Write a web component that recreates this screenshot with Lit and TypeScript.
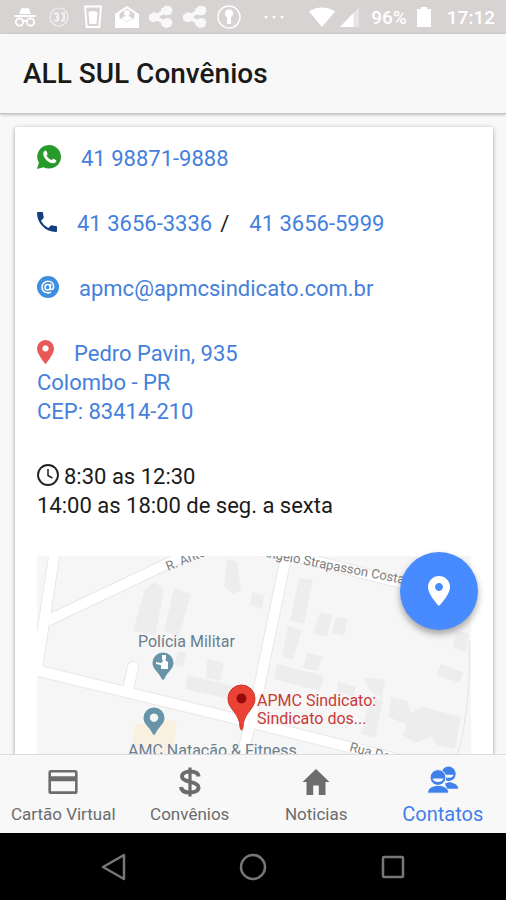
import { LitElement, html, svg, css } from "lit";
import { customElement, state } from "lit/decorators.js";

const tabs = [
  { id: "card", label: "Cartão Virtual" },
  { id: "deals", label: "Convênios" },
  { id: "news", label: "Noticias" },
  { id: "contacts", label: "Contatos" },
];

const tabIcons: Record<string, unknown> = {
  card: html`<svg viewBox="0 0 32 32" width="32" height="32">
    <path fill="currentColor" fill-rule="evenodd" d="M4 4h24a2.600 2.600 0 0 1 2.600 2.600v18.800a2.600 2.600 0 0 1-2.600 2.600H4a2.600 2.600 0 0 1-2.600-2.600V6.600A2.600 2.600 0 0 1 4 4zm0 2.500v3.700h24V6.500zm0 8.700v10h24v-10z" />
  </svg>`,
  deals: html`<svg viewBox="0 0 32 32" width="32" height="32">
    <g fill="none" stroke="currentColor">
      <path stroke-width="4" d="M24.700 10.500C24.300 7 20.500 5.600 16 5.600s-8 1.700-8 5c0 3.200 3.600 4.300 8 5.300 4.600 1 8.500 2.200 8.500 5.600 0 3.400-4 5-8.500 5-4.700 0-8.700-1.700-9-5.500" />
      <path stroke-width="3.200" d="M16 1.500v29" />
    </g>
  </svg>`,
  news: html`<svg viewBox="0 0 32 32" width="32" height="32">
    <path fill="currentColor" d="M16 3 2.500 16H6.500v13h6.700V19.500h5.600V29h6.700V16h4z" />
  </svg>`,
  contacts: html`<svg viewBox="0 0 32 32" width="32" height="32">
    <g fill="currentColor">
      <circle cx="21.500" cy="7.800" r="7.200" />
      <path fill="#f8f8f8" d="M16.500 8.800h10a5 3 0 0 1-10 0z" />
      <path d="M18 17.500c4-1.500 5-1.500 7-.8 3.800 1.300 5.800 2.400 6.200 6H20z" />
      <g stroke="#f8f8f8">
        <path stroke-width="1" d="M.6 27.200c.4-4.400 2.400-5.800 6.200-7.200 2.400-.9 6.400-.9 8.800 0 3.800 1.400 5.800 2.800 6.200 7.200z" />
        <circle cx="11" cy="11.500" r="7.900" stroke-width="1" />
      </g>
      <path fill="#f8f8f8" d="M5.600 12.500h10.800a5.400 3.400 0 0 1-10.800 0z" />
    </g>
  </svg>`,
};

const shareIcon = svg`<g opacity=".85">
  <path d="m4.500 7 4.500 1.500 1.500 3.500-2 4-4.500 1.500L0 15l-.5-4.500z" />
  <path d="m16.500.500 5.500 1 1.500 4-1.500 4-5.500 1-4-2-.5-4.500z" />
  <path d="m16.500 13 5 .5 2 4-2 4.500-5 1-4-2.500-.5-4z" />
  <path fill="none" stroke="#fff" stroke-width="4" d="m6 12 10-6M6 12l10 6" />
</g>`;

const notificationIcons = [
  svg`<path d="M8 3.500 10 3l2 .6L14 3l2 .5 1.700 5.500H6.300zM1.500 10h21v2h-21z" />
      <g fill="none" stroke="#fff" stroke-width="1.800"><circle cx="6.500" cy="17" r="3.700" /><circle cx="17.500" cy="17" r="3.700" /><path d="M10 16.500c1.200-.9 2.800-.9 4 0" /></g>`,
  svg`<g fill="none" stroke="#fff" opacity=".7"><circle cx="12" cy="12" r="9" stroke-width="1.200" /><path stroke-width="2.200" d="M7 8.500h4v7H7m2-3.500h2m3-3.500h3v7h-3" /></g>`,
  svg`<path fill="none" stroke="#fff" stroke-width="1.900" d="M4 1.500h16L18.300 22H5.700z" /><path d="M7.500 7 12 6l4.500 1-1 12h-7z" />`,
  svg`<path fill-rule="evenodd" d="M12 1 24 9v14H0V9zm0 2.500L4.500 8.500V13l7.500 4 7.500-4V8.500z" /><circle cx="12" cy="8" r="3" /><path d="M7 14c0-4 10-4 10 0l-5 2.500z" />`,
  shareIcon,
  shareIcon,
  svg`<circle cx="12" cy="12" r="11" fill="none" stroke="#fff" stroke-width="1.400" /><circle cx="12" cy="8.500" r="4" /><path d="M10 10.500h4V19h-4z" />`,
];

const buildings = [
  "M108 33l10-7 9 8-9 46-22-5z",
  "M137 32l17 6-12 42-15-5z",
  "M190 3l10 3 4 28-8 4-9-8z",
  "M170 103l17 4-4 18-14-3z",
  "M151 119l45 11 0 14-48-11z",
  "M141 96l8 1-3 14-9-3z",
  "M262 22l14 2-9 44-14-3z",
  "M283 56l12 3-5 22-14-4zM299 61l12 2-4 17-12-3z",
  "M251 70l14 4-9 30-11-4z",
  "M270 97l16 4-6 14-14-3z",
  "M240 108l47 12-4 15-46-12z",
  "M326 121l22 3-3 18-12-7zM301 126l18 5-3 10-16-5z",
  "M334 140l12 4-8 38-14-4z",
  "M354 141l16 4 4 12 12-6 38 10-6 32-18-4-6-8-16 6-12-8 4-10-18-8z",
  "M404 108l22 8-3 11-24-8zM420 74l12 4-4 18-12-4z",
  "M215 36l12 3-2 14-12-4z",
];

@customElement("app-root")
export class AppRoot extends LitElement {
  static styles = css`
    :host {
      display: flex;
      flex-direction: column;
      height: 100vh;
      overflow: hidden;
      background: #f8f8f8;
      color: #1a1a1a;
      font-family: Roboto, "Liberation Sans", sans-serif;
    }
    svg { display: block; flex: none; }
    a { color: #4480dc; text-decoration: none; }
    button { border: 0; margin: 0; padding: 0; background: none; font: inherit; color: inherit; }

    .status {
      flex: none;
      display: flex;
      align-items: center;
      justify-content: space-between;
      height: 34px;
      padding: 0 11px 0 8px;
      background: #d6d3d2;
      color: #fff;
      fill: #fff;
      font-size: 19px;
      font-weight: 500;
    }
    .notices, .system { display: flex; align-items: center; }
    .notice { display: grid; place-items: center; width: 34px; }
    .dots { margin-left: 18px; }
    .signal { margin: 0 12px 0 4px; }
    .battery { margin: 0 16px 0 10px; }

    .header {
      flex: none;
      display: flex;
      align-items: center;
      height: 79px;
      padding: 0 23px;
      border-bottom: 1px solid #c4c4c4;
      box-shadow: 0 1px 3px rgba(0, 0, 0, 0.22);
    }
    h1 { margin: 0; font-size: 28px; line-height: 32px; font-weight: 500; }

    main { flex: 1; min-height: 0; overflow: hidden; padding: 13px 13px 0 15px; }
    .card {
      display: flex;
      flex-direction: column;
      gap: 36px;
      padding: 17px 22px;
      border-radius: 2px;
      background: #fff;
      box-shadow: 0 1px 4px rgba(0, 0, 0, 0.36);
      font-size: 22px;
      line-height: 29px;
    }
    .card p, address { margin: 0; font-style: normal; }
    .row { display: flex; align-items: center; }
    .row svg { margin: 0 20px 4px 0; }
    .row.hours svg { margin-right: 5px; }
    .slash { margin: 0 20px 0 8px; }
    .line { display: block; }

    .map { position: relative; height: 240px; }
    .map-view { width: 100%; height: 100%; }
    .fab {
      position: absolute;
      top: -4px;
      right: -7px;
      display: grid;
      place-items: center;
      width: 78px;
      height: 78px;
      border-radius: 50%;
      background: #488aff;
      box-shadow: 0 4px 7px rgba(0, 0, 0, 0.34);
    }
    .road { fill: none; stroke: #fff; stroke-width: 10; stroke-linejoin: round; stroke-linecap: round; }
    .road.edge { stroke: #e8e8e9; stroke-width: 12; }
    .building { fill: #ededed; }
    .place { font-size: 16px; fill: #6b7f8d; stroke: #f6f6f6; stroke-width: 2; paint-order: stroke; }
    .target { font-size: 16px; fill: #c83a36; stroke: #f6f6f6; stroke-width: 2; paint-order: stroke; }
    .street { font-size: 13px; fill: #7d7d7d; }

    .tabs {
      flex: none;
      display: grid;
      grid-template-columns: repeat(4, 1fr);
      height: 79px;
      box-sizing: border-box;
      border-top: 1px solid #dcdcdc;
      background: #f8f8f8;
      position: relative;
    }
    .tab {
      display: flex;
      flex-direction: column;
      align-items: center;
      padding-top: 11px;
      gap: 4px;
      color: #6c6c6c;
      font-size: 17px;
      line-height: 24px;
      white-space: nowrap;
    }
    .tab.active { color: #3f80ec; font-size: 20px; }

    .nav {
      flex: none;
      display: grid;
      grid-template-columns: repeat(3, 1fr);
      height: 67px;
      box-sizing: border-box;
      padding: 0 43px;
      background: #000;
    }
    .nav button { display: grid; place-items: center; }
    .nav svg { fill: none; stroke: #777; stroke-width: 2.5; }
  `;

  @state() private active = "contacts";

  private renderMap() {
    const roads = "M18-6 0 112M12 64 172-12M-2 114 196 162 440 223M96 111 91 134M250-4 222 132 205 200M176-16 250-2 440 46";
    return html`<svg class="map-view" viewBox="0 0 434 240" preserveAspectRatio="xMinYMin slice" role="img" aria-label="Mapa">
      <path fill="#f6f6f7" d="M0 0h434v240H0z" />
      ${buildings.map((d) => svg`<path class="building" d=${d} />`)}
      <path fill="#faf0e0" d="M98 168l42-4-4 34H94z" />
      <path class="road edge" d=${roads} />
      <path class="road" d=${roads} />
      <path fill="none" stroke="#e4e4e4" d="M432 84q3 70-14 125" />
      <text class="street" transform="translate(131 15) rotate(-22)">R. Antonio</text>
      <text class="street" transform="translate(223 0) rotate(11)">Angelo Strapasson Costa</text>
      <text class="street" transform="translate(312 195) rotate(14)">Rua Domingos</text>
      <text class="place" x="101" y="91">Polícia Militar</text>
      <text class="place" x="91" y="200">AMC Natação &amp; Fitness</text>
      <path fill="#6794a9" d="M126 96.500a10.500 10.500 0 0 1 10.500 10.500c0 6-5.500 8-9 15.500-.6 1.800-2.400 1.800-3 0-3.500-7.500-9-9.500-9-15.500A10.500 10.500 0 0 1 126 96.500z" />
      <path fill="#fff" d="M125 99h4v4l-1 1 3 2v7h-7v-4l-5-1v-2l5 1 2-2-1-2z" />
      <path fill="#6794a9" fill-rule="evenodd" d="M117 151.500a10.500 10.500 0 0 1 10.500 10.500c0 6-5.500 8-9 15.500-.6 1.800-2.400 1.800-3 0-3.500-7.500-9-9.500-9-15.500A10.500 10.500 0 0 1 117 151.500zm0 6a4.200 4.200 0 1 0 .01 0z" />
      <path fill="#ea4335" stroke="#cf3428" d="M204.500 129a13.500 13.500 0 0 1 13.500 13.500c0 10-9 13-11.500 24-.2 2-.6 7.500-2 7.500s-1.800-5.500-2-7.500c-2.500-11-11.500-14-11.500-24A13.500 13.500 0 0 1 204.500 129z" />
      <circle cx="204.500" cy="142.500" r="5" fill="#960a0a" />
      <text class="target" x="220" y="150">APMC Sindicato:</text>
      <text class="target" x="220" y="168">Sindicato dos...</text>
    </svg>`;
  }

  render() {
    return html`
      <div class="status">
        <div class="notices">
          ${notificationIcons.map((icon) => html`<span class="notice"><svg viewBox="0 0 24 24" width="24" height="24">${icon}</svg></span>`)}
          <svg class="dots" viewBox="0 0 20 4" width="20" height="4"><circle cx="2" cy="2" r="1.500" /><circle cx="10" cy="2" r="1.500" /><circle cx="18" cy="2" r="1.500" /></svg>
        </div>
        <div class="system">
          <svg viewBox="0 0 26 20" width="26" height="20"><path d="M0 4.500C7-1 19-1 26 4.500L13 20z" /></svg>
          <svg class="signal" viewBox="0 0 20 20" width="20" height="20"><path d="M20 0v20H1z" opacity=".4" /><path d="M14.500 6v14H1z" /></svg>
          <span>96%</span>
          <svg class="battery" viewBox="0 0 14 20" width="14" height="20"><path d="M4 0h6v2h4v18H0V2h4z" /></svg>
          <time>17:12</time>
        </div>
      </div>

      <header class="header"><h1>ALL SUL Convênios</h1></header>

      <main>
        <section class="card">
          <p class="row">
            <svg viewBox="0 0 24 24" width="24" height="24">
              <path fill="#289a2c" d="M12.200 0a11.800 11.800 0 1 1-5.600 22.200L0 24l1.900-6.300A11.800 11.800 0 0 1 12.200 0z" />
              <path fill="#fff" d="M7.600 6c.8-.7 1.500-.6 1.900.2l1 2.300c.2.600-.3 1.200-1 2 1.300 2.400 2.700 3.500 5 4.600.8-1 1.300-1.700 2-1.400l2.400 1.200c.8.400.4 1.700-.4 2.500-3.500 3-12.400-3-12.200-8.700 0-1.200.5-2.100 1.300-2.700z" />
            </svg>
            <a href="tel:41988719888">41 98871-9888</a>
          </p>
          <p class="row">
            <svg viewBox="0 0 20 20" width="20" height="20">
              <path fill="#173f80" d="M1.100 0h3.900c.6 0 1.100.5 1.100 1.100 0 1.400.2 2.700.6 4 .1.400 0 .8-.3 1.100L4 8.700a16.800 16.800 0 0 0 7.300 7.300l2.500-2.400c.3-.3.700-.4 1.100-.3 1.300.4 2.600.6 4 .6.600 0 1.100.5 1.100 1.100v3.900c0 .6-.5 1.100-1.100 1.100C8.500 20 0 11.500 0 1.100 0 .5.500 0 1.100 0z" />
            </svg>
            <a href="tel:4136563336">41 3656-3336</a><span class="slash">/</span><a href="tel:4136565999">41 3656-5999</a>
          </p>
          <p class="row">
            <svg viewBox="0 0 22 22" width="22" height="22">
              <circle cx="11" cy="11" r="11" fill="#3f8fe0" />
              <g fill="none" stroke="#fff" stroke-width="1.500"><circle cx="10.700" cy="11.200" r="2.700" /><path d="M13.800 7.800 13.200 12c-.1 2.400 3.400 2.200 3.400-1.500 0-3.300-2.500-5.200-5.600-5.200-3.400 0-6 2.600-6 6 0 4.500 5 6.800 9 4.800" /></g>
            </svg>
            <a href="mailto:apmc@apmcsindicato.com.br">apmc@apmcsindicato.com.br</a>
          </p>
          <address>
            <a href="#mapa">
              <span class="row">
                <svg viewBox="0 0 17 24" width="17" height="24"><path fill="#e95858" fill-rule="evenodd" d="M8.500 0A8.400 8.400 0 0 1 17 8.400C17 14.500 8.500 24 8.500 24S0 14.500 0 8.400A8.400 8.400 0 0 1 8.500 0zm0 5.300a3.100 3.100 0 1 0 .01 0z" /></svg>
                Pedro Pavin, 935
              </span>
              <span class="line">Colombo - PR</span>
              <span class="line">CEP: 83414-210</span>
            </a>
          </address>
          <p>
            <span class="row hours">
              <svg viewBox="0 0 22 22" width="22" height="22"><g fill="none" stroke="#222"><circle cx="11" cy="11" r="10" stroke-width="1.900" /><path stroke-width="1.500" d="M11 5v6.500l4.500 2.700" /></g></svg>
              8:30 as 12:30
            </span>
            <span class="line">14:00 as 18:00 de seg. a sexta</span>
          </p>
          <div class="map" id="mapa">
            ${this.renderMap()}
            <button class="fab" aria-label="Abrir no mapa">
              <svg viewBox="0 0 22 30" width="22" height="30"><path fill="#fff" fill-rule="evenodd" d="M11 0a11 11 0 0 1 11 11c0 8-11 19-11 19S0 19 0 11A11 11 0 0 1 11 0zm0 7a4 4 0 1 0 .01 0z" /></svg>
            </button>
          </div>
        </section>
      </main>

      <nav class="tabs">
        ${tabs.map(
          (t) => html`<button class="tab ${t.id === this.active ? "active" : ""}" @click=${() => (this.active = t.id)}>
            ${tabIcons[t.id]}<span>${t.label}</span>
          </button>`
        )}
      </nav>

      <div class="nav">
        <button aria-label="Voltar"><svg viewBox="0 0 26 28" width="26" height="28"><path stroke-linejoin="round" d="M24 2v24L3 14z" /></svg></button>
        <button aria-label="Início"><svg viewBox="0 0 28 28" width="28" height="28"><circle cx="14" cy="14" r="12" /></svg></button>
        <button aria-label="Recentes"><svg viewBox="0 0 24 24" width="24" height="24"><rect x="2" y="2" width="20" height="20" rx="1" /></svg></button>
      </div>
    `;
  }
}
